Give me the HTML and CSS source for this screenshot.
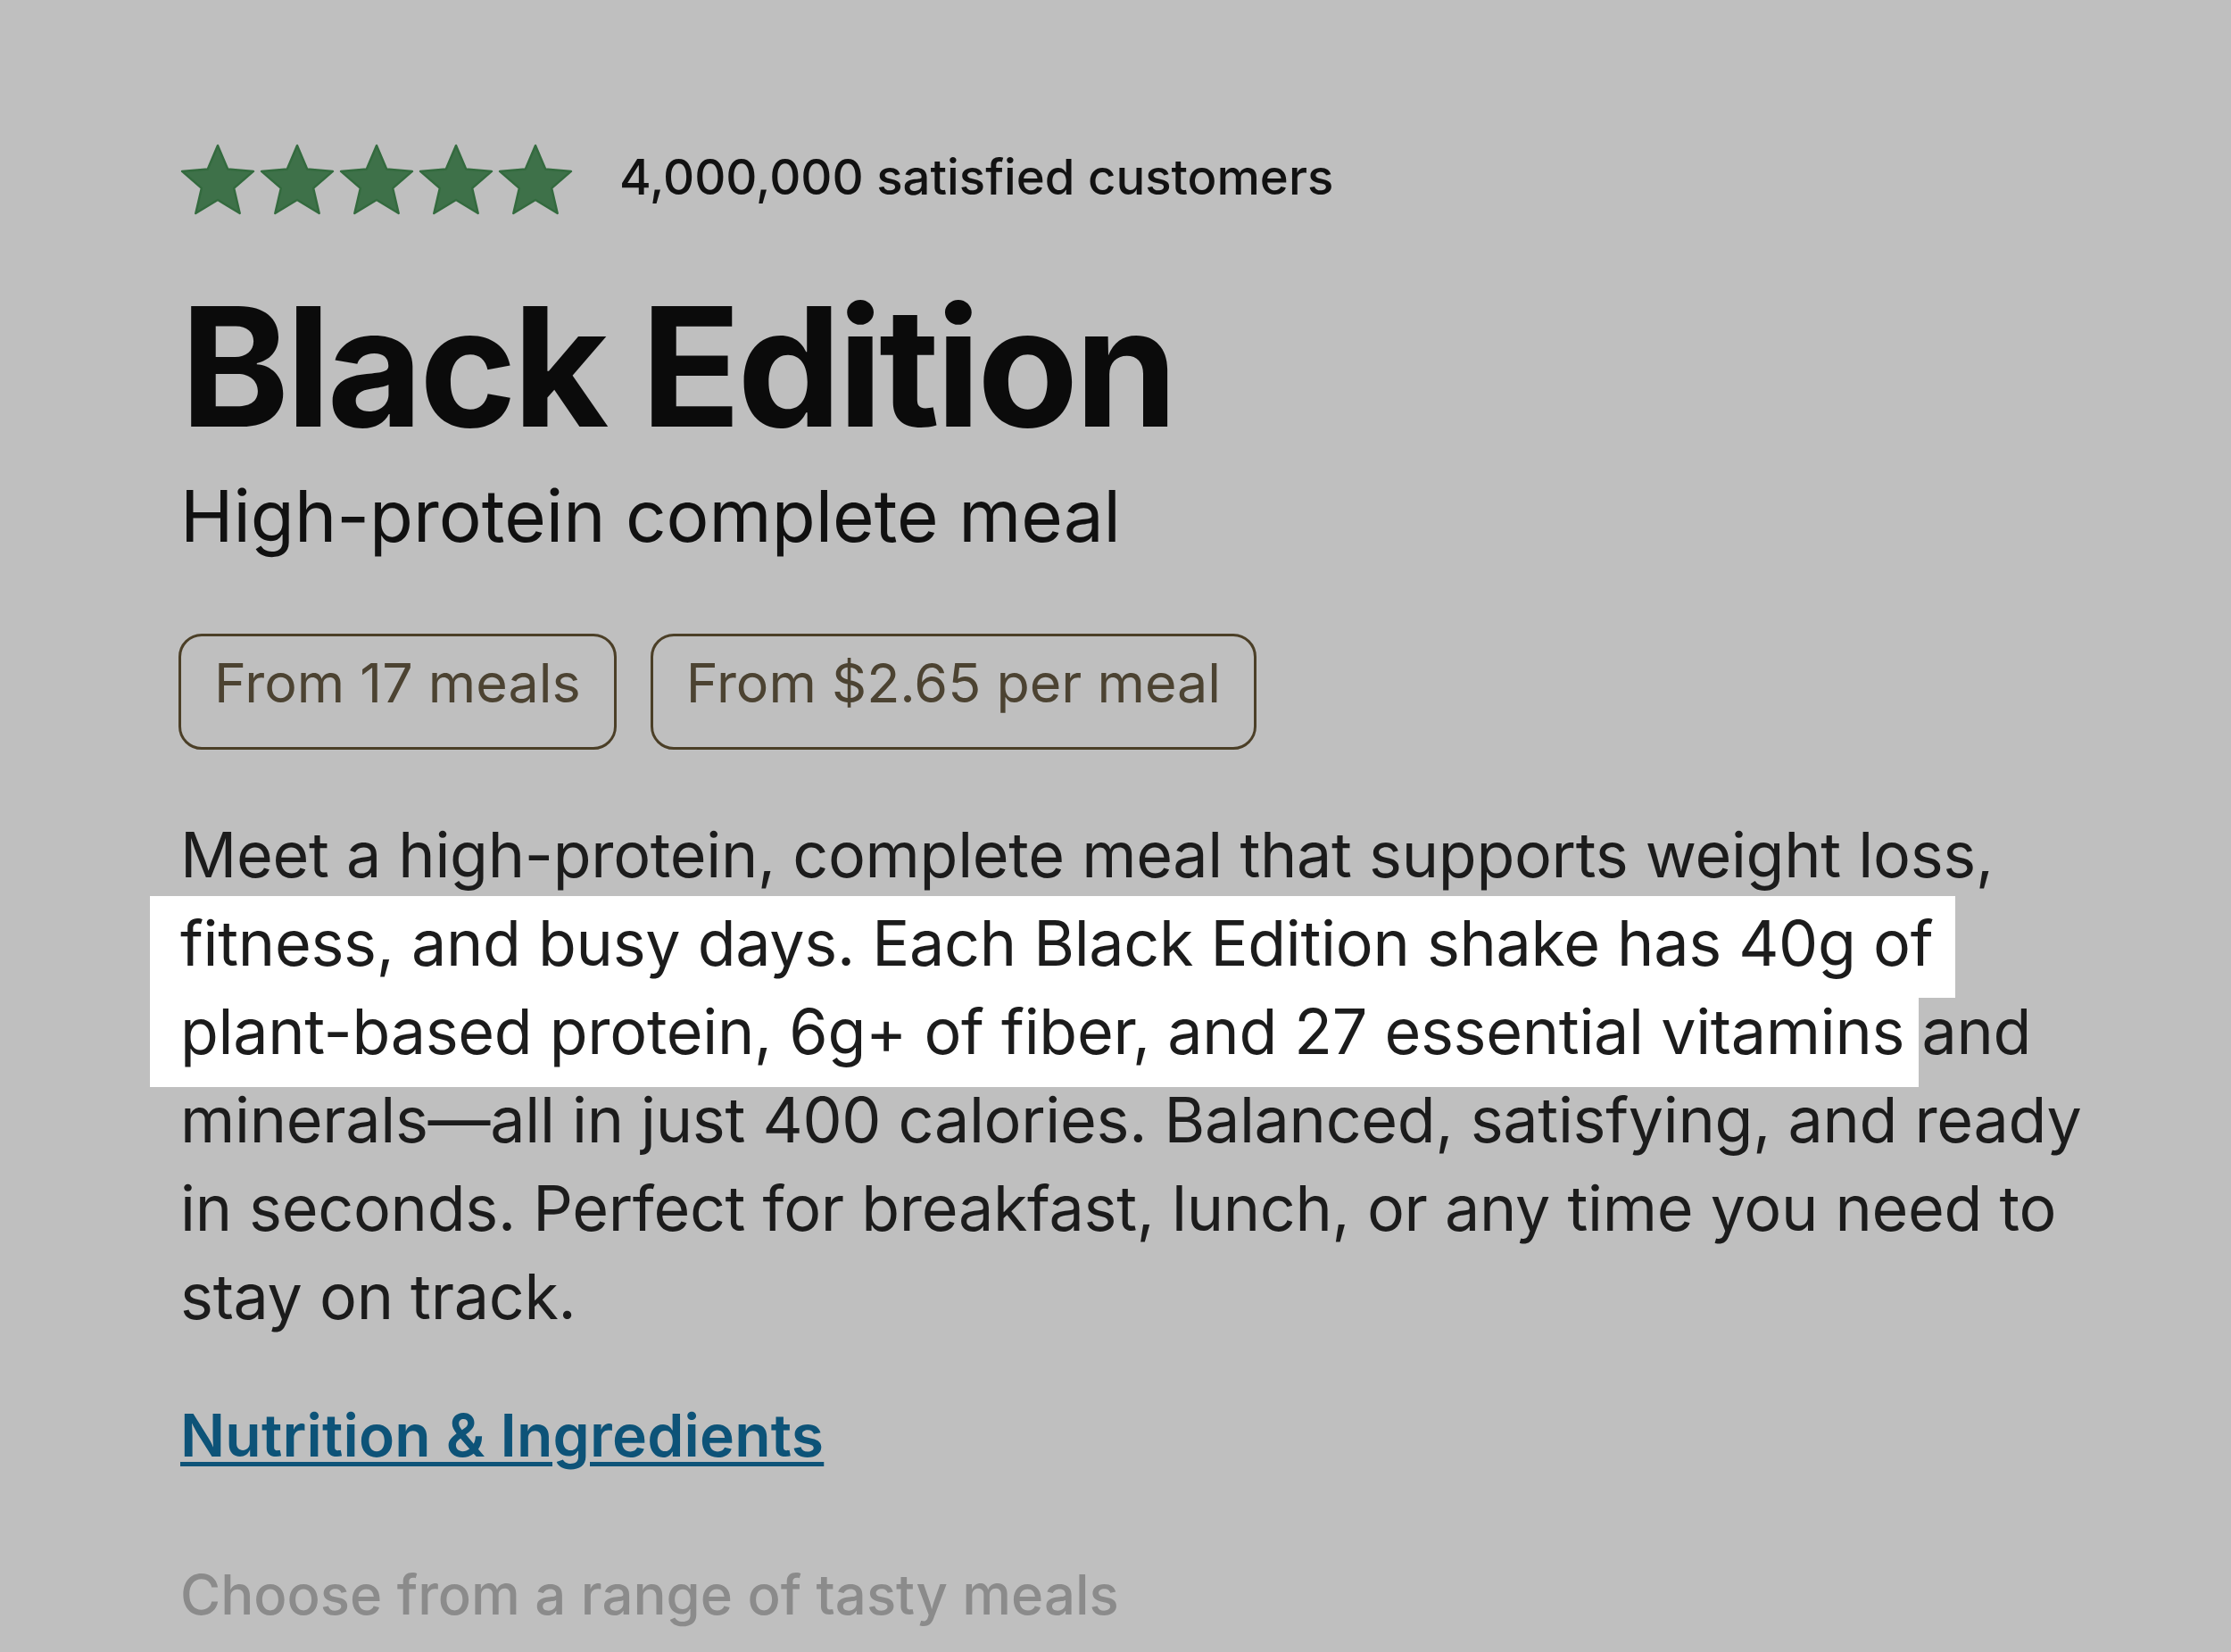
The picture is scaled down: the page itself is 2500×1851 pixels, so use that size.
FILE: index.html
```html
<!DOCTYPE html>
<html lang="en">
<head>
<meta charset="utf-8">
<title>Black Edition</title>
<link rel="stylesheet" href="styles.css">
</head>
<body>
<main class="product">
  <div class="rating">
    <div class="stars" aria-label="5 out of 5 stars">
      <svg class="star" viewBox="2 2 20 19"><path d="M12 17.27L18.18 21l-1.64-7.03L22 9.24l-7.19-.61L12 2 9.19 8.63 2 9.24l5.46 4.73L5.82 21z"/></svg>
      <svg class="star" viewBox="2 2 20 19"><path d="M12 17.27L18.18 21l-1.64-7.03L22 9.24l-7.19-.61L12 2 9.19 8.63 2 9.24l5.46 4.73L5.82 21z"/></svg>
      <svg class="star" viewBox="2 2 20 19"><path d="M12 17.27L18.18 21l-1.64-7.03L22 9.24l-7.19-.61L12 2 9.19 8.63 2 9.24l5.46 4.73L5.82 21z"/></svg>
      <svg class="star" viewBox="2 2 20 19"><path d="M12 17.27L18.18 21l-1.64-7.03L22 9.24l-7.19-.61L12 2 9.19 8.63 2 9.24l5.46 4.73L5.82 21z"/></svg>
      <svg class="star" viewBox="2 2 20 19"><path d="M12 17.27L18.18 21l-1.64-7.03L22 9.24l-7.19-.61L12 2 9.19 8.63 2 9.24l5.46 4.73L5.82 21z"/></svg>
    </div>
    <span class="rating-text">4,000,000 satisfied customers</span>
  </div>

  <h1 class="title">Black Edition</h1>
  <p class="subtitle">High-protein complete meal</p>

  <div class="pills">
    <span class="pill">From 17 meals</span>
    <span class="pill">From $2.65 per meal</span>
  </div>

  <div class="description">
    <div class="highlight highlight-one"></div>
    <div class="highlight highlight-two"></div>
    <p class="description-text">Meet a high-protein, complete meal that supports weight loss, fitness, and busy days. Each Black Edition shake has 40g of plant-based protein, 6g+ of fiber, and 27 essential vitamins and minerals—all in just 400 calories. Balanced, satisfying, and ready in seconds. Perfect for breakfast, lunch, or any time you need to stay on track.</p>
  </div>

  <a class="nutrition-link" href="#nutrition">Nutrition &amp; Ingredients</a>

  <p class="choose">Choose from a range of tasty meals</p>
</main>
</body>
</html>
```

FILE: styles.css
```css
html, body {
  margin: 0;
  padding: 0;
}

body {
  background: #bfbfbf;
  font-family: Inter, "Noto Sans", "Liberation Sans", sans-serif;
  color: #1c1c1c;
  height: 1851px;
  overflow: hidden;
}

.product {
  padding: 163px 0 0 202px;
  display: flex;
  flex-direction: column;
  align-items: flex-start;
}

.rating {
  display: flex;
  align-items: center;
  gap: 54px;
  height: 76px;
}

.stars {
  display: flex;
  gap: 9px;
  margin-left: 2px;
}

.star {
  width: 80px;
  height: 76px;
  overflow: visible;
}

.star path {
  fill: #3e7149;
  stroke: #336a3e;
  stroke-width: 0.6;
  stroke-linejoin: round;
}

.rating-text {
  font-size: 54.5px;
  line-height: 1;
  font-weight: 500;
  color: #121212;
  margin-top: -6px;
}

.title {
  margin: 80px 0 0;
  font-size: 185px;
  line-height: 1;
  font-weight: 700;
  letter-spacing: -4px;
  color: #0b0b0b;
}

.subtitle {
  margin: 34px 0 0;
  font-size: 80px;
  line-height: 1;
  font-weight: 400;
  color: #111111;
}

.pills {
  display: flex;
  gap: 38px;
  margin-top: 92px;
  margin-left: -2px;
}

.pill {
  box-sizing: border-box;
  height: 130px;
  padding: 22px 37px 0;
  border: 3px solid #4b3f27;
  border-radius: 26px;
  font-size: 61px;
  line-height: 1;
  color: #4c4332;
}

.description {
  position: relative;
  margin-top: 68px;
  width: 2152px;
}

.highlight {
  position: absolute;
  left: -34px;
  background: #ffffff;
}

.highlight-one {
  top: 96px;
  width: 2023px;
  height: 114px;
}

.highlight-two {
  top: 210px;
  width: 1982px;
  height: 100px;
}

.description-text {
  position: relative;
  margin: 0;
  font-size: 70px;
  line-height: 99px;
  letter-spacing: -0.3px;
  color: #1c1c1c;
}

.nutrition-link {
  margin-top: 73px;
  font-size: 66px;
  line-height: 1;
  font-weight: 600;
  letter-spacing: 0.2px;
  color: #0d5378;
  text-decoration: underline;
  text-decoration-thickness: 5px;
  text-underline-offset: 6px;
}

.choose {
  margin: 115px 0 0;
  font-size: 61.7px;
  line-height: 1;
  font-weight: 500;
  color: #8b8b8b;
}
```
